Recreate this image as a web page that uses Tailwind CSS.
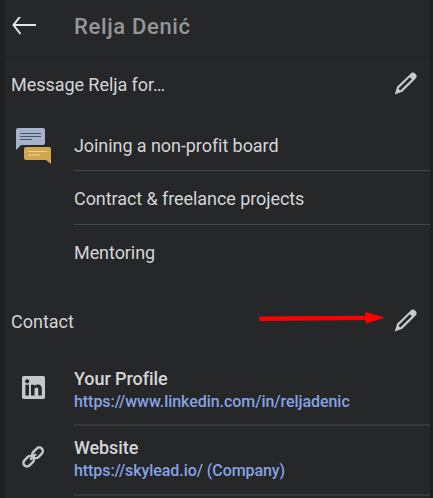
<!DOCTYPE html>
<html lang="en">
<head>
    <meta charset="UTF-8">
    <meta name="viewport" content="width=device-width, initial-scale=1.0">
    <title>Relja Denić</title>
    <script src="https://cdn.jsdelivr.net/npm/@tailwindcss/browser@4"></script>
</head>
<body class="bg-[#201f1f] font-['Roboto',sans-serif] overflow-hidden">

    <main class="relative ml-[5px] w-[425px] h-[498px] bg-[#252729] text-[#d4d5d7] text-[18px] leading-6 overflow-hidden">

        <!-- Header -->
        <header class="flex items-center h-[58px] border-b border-[#202123] pb-[3px]">
            <button class="w-[69px] pl-[7px]">
                <svg class="w-6 h-5" viewBox="0 0 24 20" fill="none" stroke="#e4e5e6" stroke-width="2">
                    <path d="M24 8H1.500M8.500 -1L1.500 8l7 9"/>
                </svg>
            </button>
            <h1 class="text-[22px] font-medium tracking-[0.65px] text-[#95969a]">Relja Denić</h1>
        </header>

        <!-- Message section -->
        <section>
            <div class="flex items-center justify-between h-[53px] pl-[6px] pr-[13px]">
                <h2 class="tracking-[-0.05px]">Message Relja for…</h2>
                <svg class="w-[23px] h-[23px] -mt-[3px]" viewBox="0 0 24 24">
                    <path fill="#c9cacb" fill-rule="evenodd" d="M0.800 23.500L3.200 15.500 17 2a3.600 3.600 0 0 1 5.400 5.100L8.600 20.700zM4.800 17.600l1.700 1.700L18.600 7.600l-2.100-2L5.200 16.700z"/>
                </svg>
            </div>
            <div class="flex">
                <div class="w-[69px] pt-[17px] pl-[11px]">
                    <svg class="w-[35px] h-[37px]" viewBox="0 0 35 37">
                        <path fill="#a5b4ca" d="M2 0h25q2 0 2 2v13q0 2-2 2H5L0 22V2q0-2 2-2z"/>
                        <path stroke="#48536a" d="M4 5.500h21M4 8.500h21M4 11.500h12"/>
                        <path fill="#d0a64e" d="M10 19h23q2 0 2 2v15l-5-4H10q-2 0-2-2v-9q0-2 2-2z"/>
                        <path stroke="#eed691" d="M12 23.500h19M12 27h12"/>
                    </svg>
                </div>
                <ul class="flex-1 tracking-[-0.07px]">
                    <li class="h-[60px] pt-[23px] border-b border-[#45474a]">Joining a non-profit board</li>
                    <li class="h-[54px] pt-[16px] border-b border-[#45474a]">Contract &amp; freelance projects</li>
                    <li class="h-[54px] pt-[16px]">Mentoring</li>
                </ul>
            </div>
        </section>

        <!-- Contact section -->
        <section>
            <div class="relative flex items-center justify-between h-[79px] pt-[6px] pl-[6px] pr-[13px]">
                <h2>Contact</h2>
                <svg class="w-[23px] h-[23px] -mt-[3px]" viewBox="0 0 24 24">
                    <path fill="#c9cacb" fill-rule="evenodd" d="M0.800 23.500L3.200 15.500 17 2a3.600 3.600 0 0 1 5.400 5.100L8.600 20.700zM4.800 17.600l1.700 1.700L18.600 7.600l-2.100-2L5.200 16.700z"/>
                </svg>
                <!-- Arrow pointing at the edit button -->
                <svg class="absolute left-[253px] top-[32px] w-[128px] h-[14px]" viewBox="0 0 128 14">
                    <path fill="#fe0000" d="M3 5.500L107.500 4.700V1L127 6.600 107.500 12.800V9L3 9.900a2.200 2.200 0 0 1 0-4.400z"/>
                </svg>
            </div>
            <ul>
                <li class="flex h-[68px]">
                    <div class="w-[69px] pt-[18px] pl-[17px]">
                        <svg class="w-[23px] h-[23px]" viewBox="0 0 23 23">
                            <rect width="23" height="23" rx="1.800" fill="#c6c7c9"/>
                            <g fill="#252729">
                                <circle cx="5.200" cy="5.300" r="2.100"/>
                                <path d="M3.400 8.700H7V19.500H3.400zM9 8.700h3.400v1.500c.6-1 1.700-1.800 3.400-1.800 3.300 0 4 2.200 4 5.100v6h-3.500v-5.400c0-1.300-.1-2.700-1.800-2.700s-2 1.300-2 2.600v5.500H9z"/>
                            </g>
                        </svg>
                    </div>
                    <div class="flex-1 pt-[9px] font-medium border-b-2 border-[#37383b]">
                        <h3 class="leading-6 tracking-[-0.08px]">Your Profile</h3>
                        <a class="block text-[16px] leading-[22px] tracking-[-0.05px] text-[#86a2e3]">https://www.linkedin.com/in/reljadenic</a>
                    </div>
                </li>
                <li class="flex h-[70px]">
                    <div class="w-[69px] pt-[20px] pl-[17px]">
                        <svg class="w-[23px] h-[23px]" viewBox="0 0 23 23" fill="none" stroke="#c6c7c9" stroke-width="2.400">
                            <rect x="0.700" y="11.600" width="12" height="7.200" rx="3.600" transform="rotate(-45 6.700 15.200)"/>
                            <rect x="9.600" y="3.200" width="12" height="7.200" rx="3.600" transform="rotate(-45 15.600 6.800)"/>
                            <path d="M8.300 13.600l5.600-5.600"/>
                        </svg>
                    </div>
                    <div class="flex-1 pt-[10px] font-medium border-b-2 border-[#37383b]">
                        <h3 class="leading-6 tracking-[-0.08px]">Website</h3>
                        <a class="block text-[16px] leading-[22px] tracking-[-0.07px] text-[#86a2e3]">https://skylead.io/ (Company)</a>
                    </div>
                </li>
            </ul>
        </section>
    </main>

</body>
</html>
